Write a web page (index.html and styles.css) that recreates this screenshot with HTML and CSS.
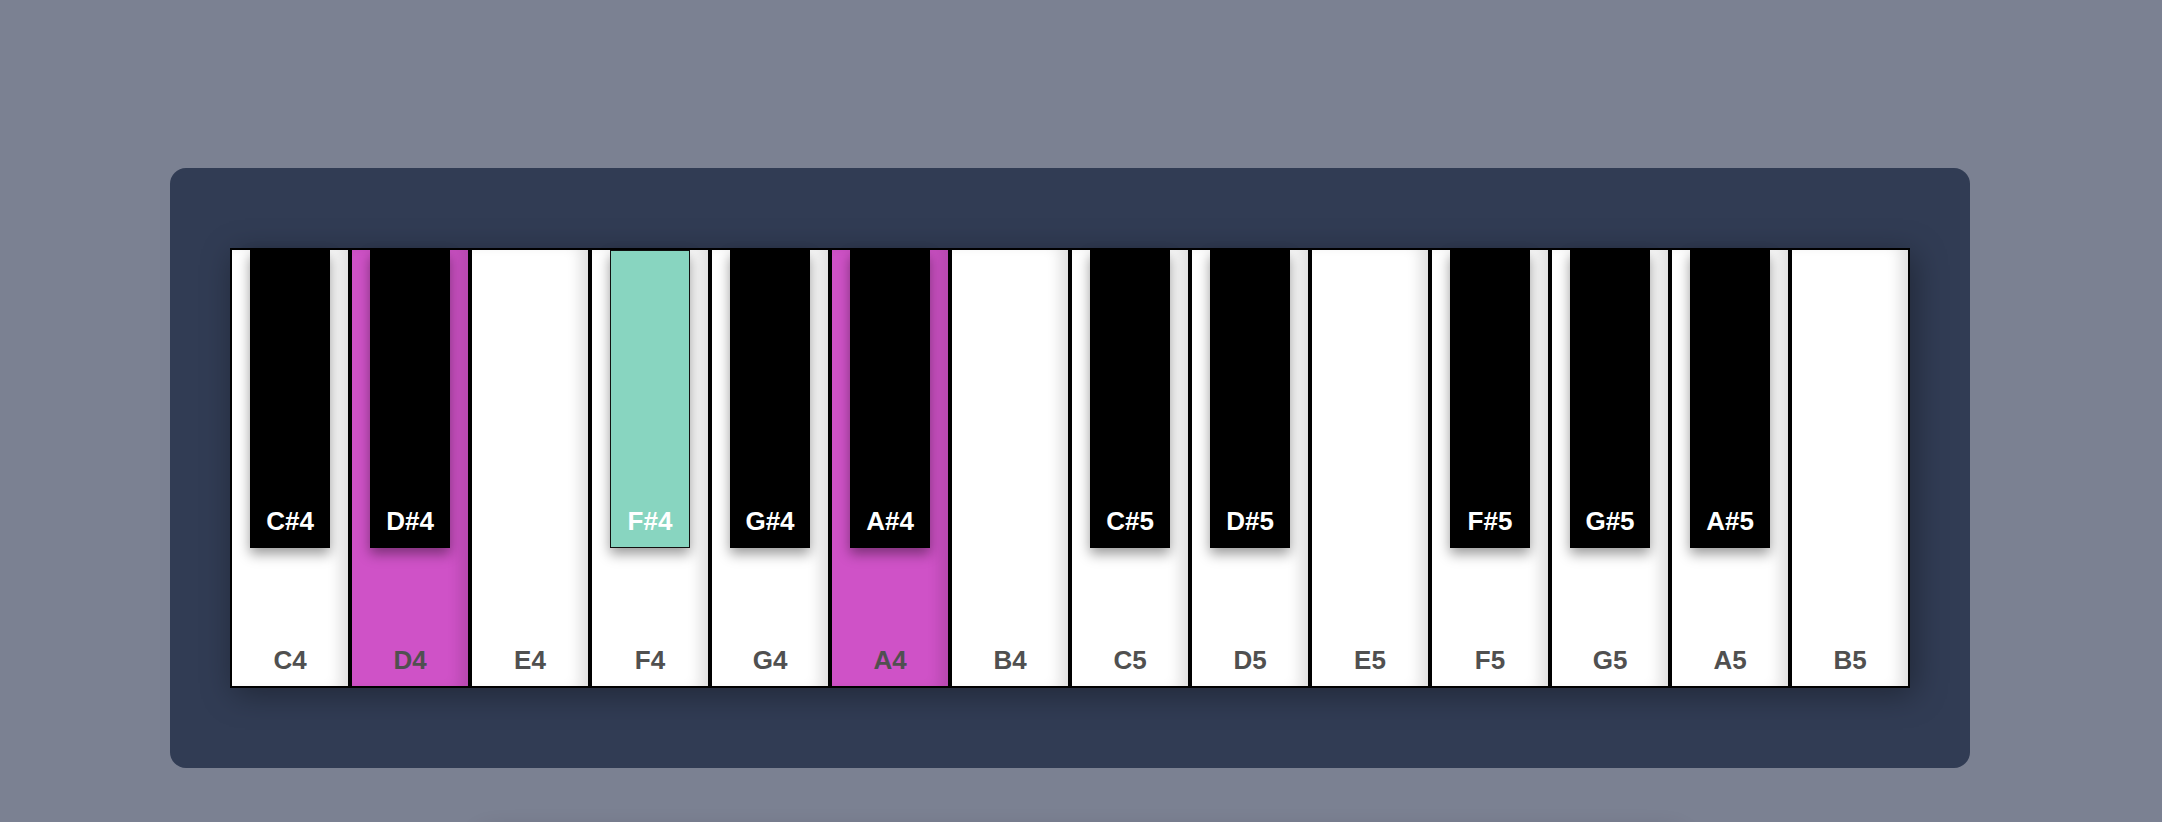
FILE: index.html
```html
<!DOCTYPE html>
<html>
<head>
<meta charset="utf-8">
<link rel="stylesheet" href="styles.css">
</head>
<body>
<div class="panel">
  <div class="keyboard">
    <div class="white"><div class="black"><span class="blabel">C#4</span></div><span class="wlabel">C4</span></div>
    <div class="white on"><div class="black"><span class="blabel">D#4</span></div><span class="wlabel">D4</span></div>
    <div class="white"><span class="wlabel">E4</span></div>
    <div class="white"><div class="black teal"><span class="blabel">F#4</span></div><span class="wlabel">F4</span></div>
    <div class="white"><div class="black"><span class="blabel">G#4</span></div><span class="wlabel">G4</span></div>
    <div class="white on"><div class="black"><span class="blabel">A#4</span></div><span class="wlabel">A4</span></div>
    <div class="white"><span class="wlabel">B4</span></div>
    <div class="white"><div class="black"><span class="blabel">C#5</span></div><span class="wlabel">C5</span></div>
    <div class="white"><div class="black"><span class="blabel">D#5</span></div><span class="wlabel">D5</span></div>
    <div class="white"><span class="wlabel">E5</span></div>
    <div class="white"><div class="black"><span class="blabel">F#5</span></div><span class="wlabel">F5</span></div>
    <div class="white"><div class="black"><span class="blabel">G#5</span></div><span class="wlabel">G5</span></div>
    <div class="white"><div class="black"><span class="blabel">A#5</span></div><span class="wlabel">A5</span></div>
    <div class="white"><span class="wlabel">B5</span></div>
  </div>
</div>
<div class="below"></div>
</body>
</html>
```

FILE: styles.css
```css
html, body {
  margin: 0;
  padding: 0;
}
body {
  background: #7b8192;
  height: 822px;
  overflow: hidden;
  font-family: "Liberation Sans", Arial, sans-serif;
}
.panel {
  box-sizing: border-box;
  margin: 168px 0 0 170px;
  width: 1800px;
  height: 600px;
  padding: 80px 60px;
  background: #313c54;
  border-radius: 16px;
}
.keyboard {
  display: flex;
  height: 440px;
  box-shadow: 4px 6px 30px rgba(0, 0, 0, 0.35);
}
.white {
  position: relative;
  box-sizing: border-box;
  width: 120px;
  height: 440px;
  border: 2px solid #000;
  background: #fff;
  box-shadow: inset -14px 0 14px -6px rgba(0, 0, 0, 0.13);
  display: flex;
  flex-direction: column;
  justify-content: flex-end;
  align-items: center;
  padding-bottom: 13px;
}
.white.on {
  background: #cf52c7;
}
.wlabel {
  font-size: 26px;
  line-height: 1;
  font-weight: bold;
  color: #505050;
}
.black {
  position: absolute;
  top: 0;
  left: 18px;
  box-sizing: border-box;
  width: 80px;
  height: 298px;
  background: #000;
  box-shadow: 0 6px 12px rgba(0, 0, 0, 0.4);
  display: flex;
  flex-direction: column;
  justify-content: flex-end;
  align-items: center;
  padding-bottom: 14px;
  z-index: 1;
}
.black.teal {
  background: #88d5c0;
  border: 1px solid #111;
  padding-bottom: 13px;
}
.blabel {
  font-size: 26px;
  line-height: 1;
  font-weight: bold;
  color: #fff;
}
.below {
  width: 1200px;
  height: 40px;
  margin: 67px auto 0;
  background: #7b8192;
  box-shadow: 0 0 24px rgba(0, 0, 0, 0.25);
  border-radius: 12px;
}
```
